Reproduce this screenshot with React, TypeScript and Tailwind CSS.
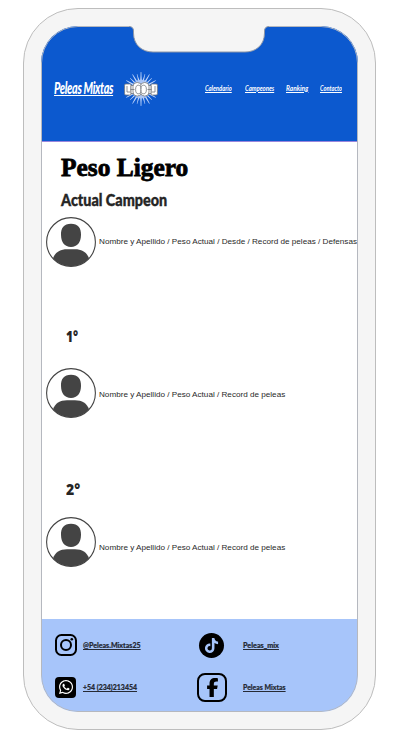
import { useLayoutEffect, useRef, useState } from "react";
import type { ReactNode } from "react";
import { FaTiktok, FaWhatsapp, FaFacebookF } from "react-icons/fa6";

/* Condenses or widens a single line so that it takes exactly `width` pixels. */
function Fit({ width, className = "", children }: { width: number; className?: string; children: ReactNode }) {
  const ref = useRef<HTMLSpanElement>(null);
  const [scale, setScale] = useState(1);
  useLayoutEffect(() => {
    if (ref.current) setScale(width / ref.current.offsetWidth);
  }, [width]);
  return (
    <span className="flex shrink-0 whitespace-nowrap" style={{ width }}>
      <span ref={ref} className={`block shrink-0 origin-left ${className}`} style={{ transform: `scaleX(${scale})` }}>
        {children}
      </span>
    </span>
  );
}

function Emblem() {
  const rays = Array.from({ length: 24 }, (_, i) => i * 15);
  return (
    <svg viewBox="0 0 34 34" className="mb-[2px] ml-[11px] h-[34px] w-[34px] shrink-0">
      {rays.map((a, i) => (
        <path key={a} d={i % 2 ? "M16.300 9L16.800 1.500H17.200L17.700 9z" : "M16.200 9L16.700 0H17.300L17.800 9z"} fill="#c4d8fb" transform={`rotate(${a} 17 17)`} />
      ))}
      <ellipse cx="17" cy="17" rx="9" ry="9.500" fill="#a9c5f6" />
      <g fill="#fff" stroke="#74777c" strokeWidth=".8">
        <rect x=".6" y="12" width="6.400" height="11" rx="1.200" />
        <rect x="27" y="12" width="6.400" height="11" rx="1.200" />
        <path d="M7 13.500h4v8H7zM23 13.500h4v8h-4z" />
        <rect x="9" y="10.500" width="8.500" height="13.500" rx="4" />
        <rect x="16.500" y="10.500" width="8.500" height="13.500" rx="4" />
        <ellipse cx="14.300" cy="17.500" rx="2.700" ry="4.300" />
        <ellipse cx="19.700" cy="17.500" rx="2.700" ry="4.300" />
        <path d="M6.500 17.500h4M23.500 17.500h4M3 14v6h3M31 14v6h-3" fill="none" />
      </g>
    </svg>
  );
}

function Avatar() {
  return (
    <svg viewBox="0 0 50 50" className="h-[50px] w-[50px] shrink-0">
      <path d="M7 41.300C9 35.500 14 32.300 21 32.300H29C36 32.300 41 35.500 43 41.300A24.400 24.400 0 0 1 7 41.300z" fill="#444" />
      <path d="M25 6.800c7 0 10.200 4 10 11.200C34.800 25.500 31.500 29.900 25 29.900S15.200 25.500 15 18C14.800 10.800 18 6.800 25 6.800z" fill="#444" />
      <circle cx="25" cy="25" r="24.400" fill="none" stroke="#444" strokeWidth="1.100" />
    </svg>
  );
}

function Fighter({ width, offset, children }: { width: number; offset: string; children: ReactNode }) {
  return (
    <div className="flex h-[50px] items-center gap-[2.500px] pl-[5px]">
      <Avatar />
      <div className={offset}>
        <Fit width={width} className="font-['Liberation_Sans',sans-serif] text-[8px] leading-[10px] text-[#292929]">{children}</Fit>
      </div>
    </div>
  );
}

function Notch() {
  return (
    <svg viewBox="0 0 134 27" className="absolute left-[91px] top-0 h-[27px] w-[134px] overflow-visible">
      <path d="M-3 0H137V.5C134 .5 132.500 2 132.500 5V7C132.500 19 124 26 113 26H21C10 26 1.500 19 1.500 7V5C1.500 2 0 .5 -3 .5z" fill="#f5f5f5" />
      <path d="M-3 .5C0 .5 1.500 2 1.500 5V7C1.500 19 10 26 21 26H113C124 26 132.500 19 132.500 7V5C132.500 2 134 .5 137 .5" fill="none" stroke="#8c96a8" />
    </svg>
  );
}

function Contact({ icon, iconBox, width, children }: { icon: ReactNode; iconBox: string; width: number; children: ReactNode }) {
  return (
    <div className="flex h-[30px] items-center">
      <div className={`flex shrink-0 ${iconBox}`}>{icon}</div>
      <Fit width={width} className="font-['Lato','Noto_Sans',sans-serif] text-[8px] font-black leading-[10px] text-[#252a35] underline decoration-1 underline-offset-1 [-webkit-text-stroke:0.2px_#252a35]">{children}</Fit>
    </div>
  );
}

const links = [
  { label: "Calendario", width: 27, box: "w-[40px]" },
  { label: "Campeones", width: 29, box: "w-[41px]" },
  { label: "Ranking", width: 22, box: "w-[34px]" },
  { label: "Contacto", width: 22, box: "w-[22px]" },
];

export default function App() {
  return (
    <div className="h-[747px] w-[410px] bg-white pl-[23px] pt-[8px]">
      <div className="h-[722px] w-[353px] rounded-[55px] border border-[#bdbdbd] bg-[#f5f5f5] p-[17px]">
        <div className="relative flex h-[686px] w-[317px] flex-col overflow-hidden rounded-[37px] bg-white">
          <header className="flex h-[116px] shrink-0 items-center border-b border-[#9a86dc] bg-[#0c59cf] pl-[13px] pt-[12px] text-white">
            <div className="pb-[4px]">
              <Fit width={59} className="font-['Lato',sans-serif] text-[17px] font-black italic leading-[18px] tracking-[-0.5px] underline decoration-1 underline-offset-1">Peleas Mixtas</Fit>
            </div>
            <Emblem />
            <nav className="ml-[47px] flex pb-[4px]">
              {links.map((l) => (
                <a key={l.label} className={l.box}>
                  <Fit width={l.width} className="font-['Lato',sans-serif] text-[8px] font-bold italic leading-[10px] underline decoration-1 underline-offset-1">{l.label}</Fit>
                </a>
              ))}
            </nav>
          </header>
          <main className="h-[477px] shrink-0 pt-[11px]">
            <h1 className="pl-[20px]">
              <Fit width={127} className="font-['Liberation_Serif',serif] text-[26px] font-bold leading-[30px] text-black [-webkit-text-stroke:0.8px_black]">Peso Ligero</Fit>
            </h1>
            <h2 className="pl-[19.500px] pt-[7px]">
              <Fit width={106.500} className="font-['Lato',sans-serif] text-[17px] font-black leading-[20px] text-[#252525] [-webkit-text-stroke:0.4px_#252525]">Actual Campeon</Fit>
            </h2>
            <div className="mt-[7px]">
              <Fighter width={257.500} offset="pt-0">Nombre y Apellido / Peso Actual / Desde / Record de peleas / Defensas</Fighter>
            </div>
            <h3 className="mt-[59px] h-[21px] pl-[25px]">
              <Fit width={12} className="font-['Open_Sans',sans-serif] text-[16px] font-extrabold leading-[20px] text-[#252525]">1°</Fit>
            </h3>
            <div className="mt-[21px]">
              <Fighter width={186} offset="pt-[4px]">Nombre y Apellido / Peso Actual / Record de peleas</Fighter>
            </div>
            <h3 className="mt-[61px] h-[21px] pl-[25px]">
              <Fit width={14} className="font-['Open_Sans',sans-serif] text-[16px] font-extrabold leading-[20px] text-[#252525]">2°</Fit>
            </h3>
            <div className="mt-[17px]">
              <Fighter width={186} offset="pt-[12px]">Nombre y Apellido / Peso Actual / Record de peleas</Fighter>
            </div>
          </main>
          <footer className="grid flex-1 grid-cols-[142px_1fr] content-start gap-y-[12px] bg-[#a7c5fa] pl-[14px] pt-[11px]">
            <Contact
              iconBox="w-[28px]"
              width={58}
              icon={
                <svg viewBox="0 0 22 22" className="h-[22px] w-[22px]" fill="none" stroke="#000" strokeWidth="2">
                  <rect x="1" y="1" width="20" height="20" rx="5.500" />
                  <circle cx="11" cy="11" r="5" />
                  <circle cx="16.800" cy="5.200" r="1.300" fill="#000" stroke="none" />
                </svg>
              }
            >
              @Peleas.Mixtas25
            </Contact>
            <Contact
              iconBox="w-[46px] pl-[2px]"
              width={36}
              icon={
                <span className="flex h-[25px] w-[25px] items-center justify-center rounded-full bg-black text-[#a7c5fa]">
                  <FaTiktok size={15} />
                </span>
              }
            >
              Peleas_mix
            </Contact>
            <Contact
              iconBox="w-[28px]"
              width={54}
              icon={
                <span className="flex h-[21px] w-[21px] items-center justify-center rounded-[4px] bg-black text-white">
                  <FaWhatsapp size={16} />
                </span>
              }
            >
              +54 (234)213454
            </Contact>
            <Contact
              iconBox="w-[46px]"
              width={43}
              icon={
                <span className="flex h-[29px] w-[30px] items-center justify-center rounded-[8px] border-2 border-black text-black">
                  <FaFacebookF size={19} />
                </span>
              }
            >
              Peleas Mixtas
            </Contact>
          </footer>
          <div className="pointer-events-none absolute inset-0 rounded-[37px] border border-[#b5b8bf]" />
          <Notch />
        </div>
      </div>
    </div>
  );
}
